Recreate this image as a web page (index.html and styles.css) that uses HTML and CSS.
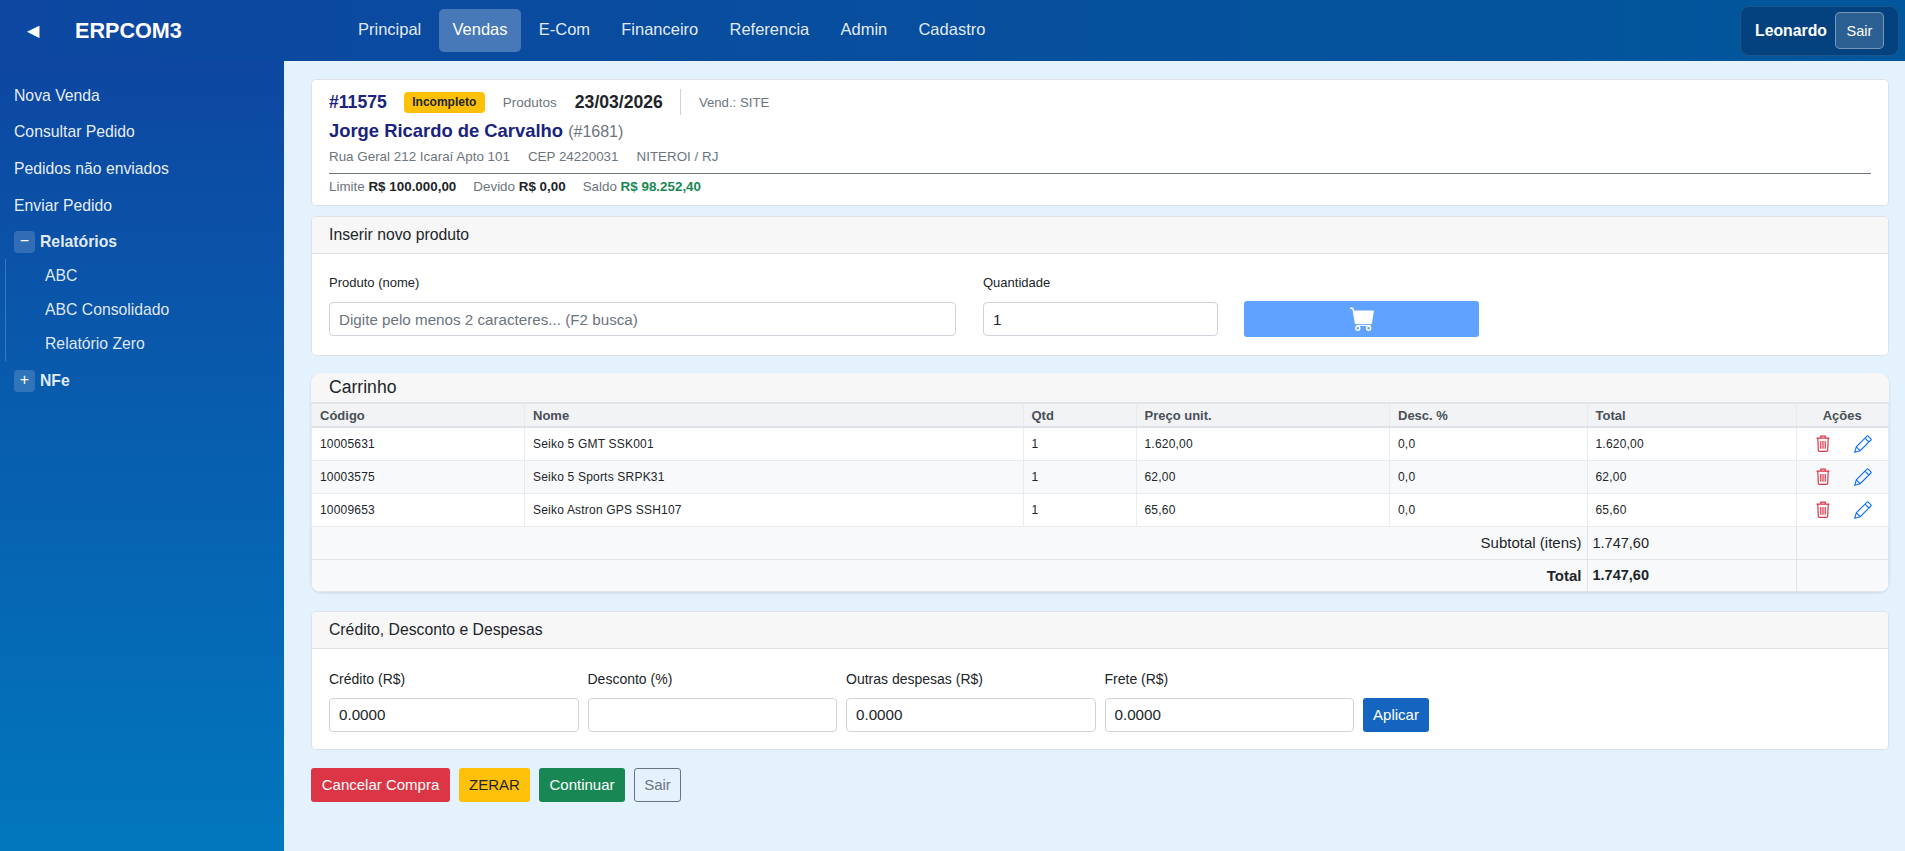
FILE: index.html
```html
<!DOCTYPE html>
<html lang="pt-BR">
<head>
    <meta charset="UTF-8">
    <meta name="viewport" content="width=device-width, initial-scale=1.0">
    <title>ERPCOM3</title>
    <link rel="stylesheet" href="styles.css">
</head>
<body>
<svg class="icon-defs" aria-hidden="true">
    <symbol id="icon-trash" viewBox="0 0 14 17">
        <path d="M.5 3.200h13M4.800 3V1.200h4.400V3M1.800 3.200l.5 11.900c0 .8.500 1.300 1.300 1.300h6.800c.8 0 1.300-.5 1.300-1.300l.5-11.900M4.800 6v7.800M7 6v7.800M9.200 6v7.800" fill="none" stroke="currentColor" stroke-width="1.200"/>
    </symbol>
    <symbol id="icon-pencil" viewBox="0 0 18 18">
        <path d="M.8 17.200l1.500-5.400L13 1.100c.4-.4.8-.4 1.200 0l2.700 2.700c.4.4.4.8 0 1.200L6.200 15.700zM2.300 11.800l3.900 3.900M11 3.100l3.900 3.900" fill="none" stroke="currentColor" stroke-width="1.100"/>
    </symbol>
    <symbol id="icon-cart" viewBox="0 0 24 24">
        <path d="M0 .6h2.600c.5 0 .8.200.9.700l.5 2.200h19.400c.4 0 .6.300.5.700l-2 12.300c-.1.400-.3.600-.7.600H5.600c-.4 0-.6-.2-.7-.6L2.300 2.100H0z" fill="currentColor"/>
        <path d="M6.500 18.400h14.200" stroke="currentColor" stroke-width="1.200"/>
        <circle cx="7.800" cy="21.200" r="2" fill="none" stroke="currentColor" stroke-width="1.400"/>
        <circle cx="18.600" cy="21.200" r="2" fill="none" stroke="currentColor" stroke-width="1.400"/>
    </symbol>
</svg>

<header class="topbar">
    <div class="topbar-left">
        <span class="sidebar-toggle">◀</span>
        <span class="brand">ERPCOM3</span>
    </div>
    <nav class="main-nav">
        <a class="nav-item">Principal</a>
        <a class="nav-item active">Vendas</a>
        <a class="nav-item">E-Com</a>
        <a class="nav-item">Financeiro</a>
        <a class="nav-item">Referencia</a>
        <a class="nav-item">Admin</a>
        <a class="nav-item">Cadastro</a>
    </nav>
    <div class="user-box">
        <span class="user-name">Leonardo</span>
        <button type="button" class="user-exit">Sair</button>
    </div>
</header>

<div class="page">
    <aside class="sidebar">
        <a class="side-link">Nova Venda</a>
        <a class="side-link">Consultar Pedido</a>
        <a class="side-link">Pedidos não enviados</a>
        <a class="side-link">Enviar Pedido</a>
        <div class="side-group"><span class="side-box">−</span>Relatórios</div>
        <div class="side-sub">
            <a class="side-sublink">ABC</a>
            <a class="side-sublink">ABC Consolidado</a>
            <a class="side-sublink">Relatório Zero</a>
        </div>
        <div class="side-group"><span class="side-box">+</span>NFe</div>
    </aside>

    <main class="content">
        <section class="card order-card">
            <div class="order-top">
                <span class="order-number">#11575</span>
                <span class="badge">Incompleto</span>
                <span class="order-muted">Produtos</span>
                <span class="order-date">23/03/2026</span>
                <span class="order-seller">Vend.: SITE</span>
            </div>
            <div class="order-client">Jorge Ricardo de Carvalho <span class="client-id">(#1681)</span></div>
            <div class="order-address">
                <span>Rua Geral 212 Icaraí Apto 101</span>
                <span>CEP 24220031</span>
                <span>NITEROI / RJ</span>
            </div>
            <div class="order-credit">
                <span>Limite <b>R$ 100.000,00</b></span>
                <span>Devido <b>R$ 0,00</b></span>
                <span>Saldo <b class="positive">R$ 98.252,40</b></span>
            </div>
        </section>

        <section class="card">
            <div class="card-header">Inserir novo produto</div>
            <div class="product-form">
                <div class="field field-product">
                    <label for="produto">Produto (nome)</label>
                    <input id="produto" type="text" placeholder="Digite pelo menos 2 caracteres... (F2 busca)">
                </div>
                <div class="field field-qty">
                    <label for="quantidade">Quantidade</label>
                    <input id="quantidade" type="text" value="1">
                </div>
                <button type="button" class="add-button" aria-label="Adicionar">
                    <svg class="icon-cart"><use href="#icon-cart"/></svg>
                </button>
            </div>
        </section>

        <section class="card cart-card">
            <div class="cart-title">Carrinho</div>
            <table class="cart-table">
                <colgroup>
                    <col class="col-code"><col class="col-name"><col class="col-qty"><col class="col-price">
                    <col class="col-disc"><col class="col-total"><col class="col-actions">
                </colgroup>
                <thead>
                <tr>
                    <th>Código</th>
                    <th>Nome</th>
                    <th>Qtd</th>
                    <th>Preço unit.</th>
                    <th>Desc. %</th>
                    <th>Total</th>
                    <th class="center">Ações</th>
                </tr>
                </thead>
                <tbody>
                <tr>
                    <td>10005631</td>
                    <td>Seiko 5 GMT SSK001</td>
                    <td>1</td>
                    <td>1.620,00</td>
                    <td>0,0</td>
                    <td>1.620,00</td>
                    <td class="actions">
                        <svg class="icon-trash"><use href="#icon-trash"/></svg>
                        <svg class="icon-pencil"><use href="#icon-pencil"/></svg>
                    </td>
                </tr>
                <tr>
                    <td>10003575</td>
                    <td>Seiko 5 Sports SRPK31</td>
                    <td>1</td>
                    <td>62,00</td>
                    <td>0,0</td>
                    <td>62,00</td>
                    <td class="actions">
                        <svg class="icon-trash"><use href="#icon-trash"/></svg>
                        <svg class="icon-pencil"><use href="#icon-pencil"/></svg>
                    </td>
                </tr>
                <tr>
                    <td>10009653</td>
                    <td>Seiko Astron GPS SSH107</td>
                    <td>1</td>
                    <td>65,60</td>
                    <td>0,0</td>
                    <td>65,60</td>
                    <td class="actions">
                        <svg class="icon-trash"><use href="#icon-trash"/></svg>
                        <svg class="icon-pencil"><use href="#icon-pencil"/></svg>
                    </td>
                </tr>
                </tbody>
                <tfoot>
                <tr>
                    <td colspan="5" class="foot-label">Subtotal (itens)</td>
                    <td class="foot-value">1.747,60</td>
                    <td></td>
                </tr>
                <tr class="foot-total">
                    <td colspan="5" class="foot-label">Total</td>
                    <td class="foot-value">1.747,60</td>
                    <td></td>
                </tr>
                </tfoot>
            </table>
        </section>

        <section class="card">
            <div class="card-header">Crédito, Desconto e Despesas</div>
            <div class="discount-form">
                <div class="field">
                    <label for="credito">Crédito (R$)</label>
                    <input id="credito" type="text" value="0.0000">
                </div>
                <div class="field">
                    <label for="desconto">Desconto (%)</label>
                    <input id="desconto" type="text">
                </div>
                <div class="field">
                    <label for="despesas">Outras despesas (R$)</label>
                    <input id="despesas" type="text" value="0.0000">
                </div>
                <div class="field">
                    <label for="frete">Frete (R$)</label>
                    <input id="frete" type="text" value="0.0000">
                </div>
                <button type="button" class="btn btn-apply">Aplicar</button>
            </div>
        </section>

        <div class="page-actions">
            <button type="button" class="btn btn-danger">Cancelar Compra</button>
            <button type="button" class="btn btn-warning">ZERAR</button>
            <button type="button" class="btn btn-success">Continuar</button>
            <button type="button" class="btn btn-outline">Sair</button>
        </div>
    </main>
</div>
</body>
</html>
```

FILE: styles.css
```css
* {
    box-sizing: border-box;
}
body {
    font-family: "Liberation Sans", Arial, sans-serif;
    background-color: #e3f2fd;
    color: #212529;
    margin: 0;
    font-size: 14px;
}
.icon-defs {
    display: none;
}

/* top bar */
.topbar {
    height: 61px;
    display: flex;
    align-items: center;
    padding: 0 6px 0 27px;
    background: linear-gradient(90deg, #0d47a1, #01579b);
    color: #fff;
}
.topbar-left {
    width: 318px;
    display: flex;
    align-items: center;
    flex-shrink: 0;
}
.sidebar-toggle {
    width: 48px;
    font-size: 16px;
}
.brand {
    font-size: 21.600px;
    font-weight: bold;
}
.main-nav {
    display: flex;
    gap: 5.200px;
    flex: 1;
}
.nav-item {
    display: block;
    padding: 0 13px;
    height: 43px;
    line-height: 41px;
    font-size: 16.500px;
    border-radius: 5px;
    color: rgba(255, 255, 255, 0.9);
}
.nav-item.active {
    background-color: rgba(255, 255, 255, 0.25);
    color: #fff;
}
.user-box {
    width: 159px;
    height: 50px;
    display: flex;
    align-items: center;
    justify-content: space-between;
    padding: 0 14px;
    background-color: #04427f;
    border: 1px solid rgba(255, 255, 255, 0.1);
    border-radius: 9px;
}
.user-name {
    font-size: 15.800px;
    font-weight: bold;
}
.user-exit {
    width: 49px;
    height: 37px;
    padding: 0;
    color: #fff;
    font-family: inherit;
    font-size: 14.500px;
    background-color: rgba(255, 255, 255, 0.16);
    border: 1px solid rgba(255, 255, 255, 0.35);
    border-radius: 5px;
}

.page {
    display: flex;
    min-height: 790px;
}

/* sidebar */
.sidebar {
    width: 284px;
    flex-shrink: 0;
    padding-top: 16.500px;
    background: linear-gradient(180deg, #0d47a1, #0277bd);
    color: #fff;
    font-size: 15.750px;
}
.side-link {
    display: block;
    height: 36.700px;
    line-height: 36px;
    padding-left: 14px;
    color: rgba(255, 255, 255, 0.92);
}
.side-group {
    display: flex;
    align-items: center;
    gap: 5px;
    height: 36px;
    padding-left: 14px;
    font-weight: bold;
    color: rgba(255, 255, 255, 0.9);
}
.side-box {
    width: 21px;
    height: 22px;
    line-height: 20px;
    text-align: center;
    font-weight: normal;
    font-size: 16px;
    color: #fff;
    background-color: rgba(255, 255, 255, 0.16);
    border-radius: 4px;
}
.side-sub {
    margin: -1px 0 2px 5px;
    border-left: 1px solid rgba(255, 255, 255, 0.2);
}
.side-sublink {
    display: block;
    height: 34px;
    line-height: 34px;
    padding-left: 39px;
    font-size: 15.750px;
    color: rgba(255, 255, 255, 0.88);
}

/* main area */
.content {
    flex: 1;
    padding: 18px 16px 0 27px;
}
.card {
    background-color: #fff;
    border: 1px solid #dee2e6;
    border-radius: 5px;
    margin-bottom: 10px;
    overflow: hidden;
}
.card-header {
    height: 37px;
    line-height: 35px;
    padding-left: 17px;
    font-size: 15.750px;
    background-color: #f7f7f7;
    border-bottom: 1px solid #dee2e6;
}

.order-card {
    height: 127px;
    padding: 9px 17px 0;
}
.order-top {
    display: flex;
    align-items: center;
    height: 26px;
}
.order-number {
    font-size: 17.600px;
    font-weight: bold;
    color: #1a237e;
    margin-right: 17px;
}
.badge {
    height: 21px;
    line-height: 20px;
    padding: 0 8.500px;
    font-size: 12px;
    font-weight: bold;
    background-color: #ffc107;
    border-radius: 4px;
    margin-right: 18px;
}
.order-muted {
    font-size: 13.500px;
    color: #6c757d;
    margin-right: 18px;
}
.order-date {
    font-size: 17.600px;
    font-weight: bold;
    padding-right: 17px;
    margin-right: 18px;
    line-height: 26px;
    border-right: 1px solid #ced4da;
}
.order-seller {
    font-size: 13.200px;
    color: #6c757d;
}
.order-client {
    margin-top: 4px;
    line-height: 24px;
    font-size: 18.400px;
    font-weight: bold;
    color: #1a237e;
}
.client-id {
    font-weight: normal;
    font-size: 16px;
    color: #6c757d;
}
.order-address {
    display: flex;
    gap: 18px;
    margin-top: 4px;
    padding-bottom: 7px;
    line-height: 18px;
    font-size: 13.400px;
    color: #6c757d;
    border-bottom: 1px solid #6c757d;
}
.order-credit {
    display: flex;
    gap: 17px;
    margin-top: 4px;
    line-height: 18px;
    font-size: 13.400px;
    color: #6c757d;
}
.order-credit b {
    color: #212529;
}
.order-credit b.positive {
    color: #198754;
}

/* forms */
.field {
    display: flex;
    flex-direction: column;
}
.field label {
    font-size: 13px;
    line-height: 16px;
    margin-bottom: 11px;
}
.field input {
    height: 34px;
    padding: 0 9px;
    font-family: inherit;
    font-size: 15.200px;
    color: #212529;
    border: 1px solid #ced4da;
    border-radius: 4px;
    width: 100%;
}
.field input::placeholder {
    color: #6c757d;
}
.product-form {
    display: flex;
    align-items: flex-end;
    height: 101px;
    padding: 0 17px 19px;
}
.field-product {
    width: 627px;
    margin-right: 27px;
}
.field-qty {
    width: 235px;
    margin-right: 26px;
}
.add-button {
    width: 235px;
    height: 36px;
    margin-bottom: -1px;
    padding: 0;
    display: flex;
    align-items: center;
    justify-content: center;
    color: #fff;
    background-color: #5fa2ff;
    border: none;
    border-radius: 3px;
}
.icon-cart {
    width: 24px;
    height: 24px;
}
.discount-form {
    display: flex;
    align-items: flex-end;
    gap: 9px;
    height: 100px;
    padding: 0 17px 17px;
}
.discount-form .field {
    width: 249.500px;
}
.discount-form .field label {
    font-size: 14px;
}

/* carrinho */
.cart-card {
    margin: 17px 0 19px;
    border: none;
    border-radius: 11px;
    background-color: #f7f7f7;
    box-shadow: 0 1px 3px rgba(0, 0, 0, 0.12);
}
.cart-title {
    height: 29px;
    line-height: 29px;
    padding-left: 18px;
    font-size: 17.600px;
    background-color: #f7f7f7;
}
.cart-table {
    width: 100%;
    table-layout: fixed;
    border-collapse: collapse;
    background-color: #fff;
    font-size: 12px;
    letter-spacing: 0.2px;
}
.col-code { width: 213px; }
.col-name { width: 498.500px; }
.col-qty { width: 113px; }
.col-price { width: 253.500px; }
.col-disc { width: 197.500px; }
.col-total { width: 209px; }
.cart-table th,
.cart-table td {
    padding: 0 8px;
    border: 1px solid #e9ecef;
    text-align: left;
}
.cart-table th {
    height: 24px;
    font-size: 13px;
    letter-spacing: 0;
    color: #495057;
    background-color: #f1f3f5;
    border-bottom: 2px solid #dee2e6;
    border-top: 2px solid #e2e4e7;
}
.cart-table th.center {
    text-align: center;
}
.cart-table td {
    height: 33px;
}
.cart-table tbody tr:nth-child(even) td {
    background-color: #f8f9fa;
}
.actions {
    white-space: nowrap;
    padding-left: 11px !important;
}
.actions svg {
    vertical-align: middle;
}
.icon-trash {
    width: 14px;
    height: 17px;
    color: #dc3545;
    margin: 0 21px 0 8px;
}
.icon-pencil {
    width: 18px;
    height: 18px;
    color: #0d6efd;
}
.cart-table tfoot td {
    background-color: #f8f9fa;
    border-color: #e1e3e6;
    font-size: 14.500px;
    letter-spacing: 0;
}
.cart-table .foot-total td {
    height: 32px;
    font-weight: bold;
}
.cart-table .foot-label {
    text-align: right;
    padding-right: 5px;
    font-size: 15px;
}
.cart-table .foot-value {
    padding-left: 5px;
}

/* buttons */
.btn {
    height: 34px;
    padding: 0;
    font-family: inherit;
    font-size: 15px;
    border: 1px solid transparent;
    border-radius: 3px;
}
.btn-apply {
    color: #fff;
    background-color: #1565c0;
    flex-shrink: 0;
    width: 66px;
}
.page-actions {
    display: flex;
    gap: 9px;
    margin-top: 18px;
}
.btn-danger {
    width: 139px;
    color: #fff;
    background-color: #dc3545;
}
.btn-warning {
    width: 71px;
    color: #212529;
    background-color: #ffc107;
}
.btn-success {
    width: 86px;
    color: #fff;
    background-color: #198754;
}
.btn-outline {
    width: 47px;
    color: #6c757d;
    background-color: transparent;
    border-color: #6c757d;
}
```
